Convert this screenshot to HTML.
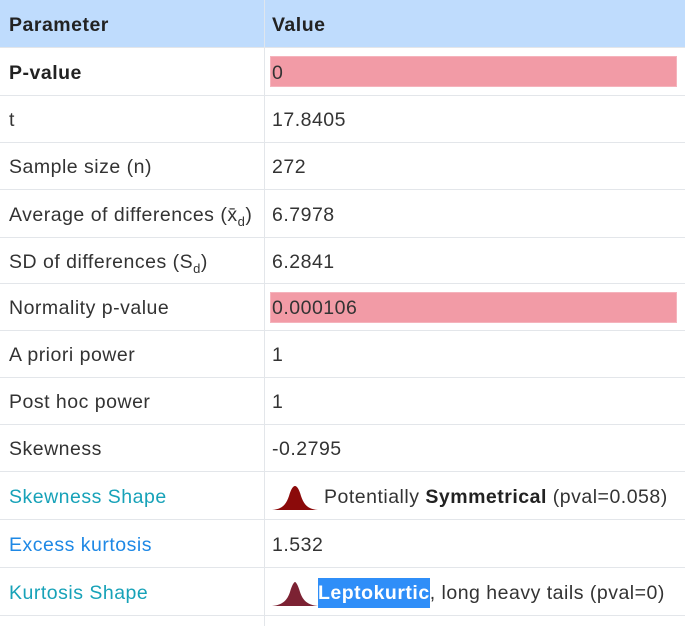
<!DOCTYPE html>
<html><head><style>
body{margin:0;width:685px;height:621px;overflow:hidden;background:#fff;font-family:"Liberation Sans",sans-serif;font-size:19.5px;letter-spacing:0.5px;color:#333}
.r{position:absolute;left:0;width:685px;border-bottom:1.5px solid #e3e6ea}
.c1,.c2{position:absolute;top:0;bottom:0;display:flex;align-items:center;white-space:nowrap;padding-top:3px;box-sizing:border-box}
.c1{left:0;width:265px;padding-left:9px;border-right:1.5px solid #e3e6ea}
.c2{left:266px;right:0;padding-left:6px}
.hl{position:absolute;left:270px;width:407px;height:31px;background:#f29ba6;border:1px solid #f5b3bc;box-sizing:border-box}
.teal{color:#17a2b8}.blue{color:#1e88e5}
sub{font-size:13px;vertical-align:-5px;line-height:0}
svg{margin-right:6px}
</style></head><body>
<div class="r" style="top:0;height:47px;background:#bfdcfd"><div class="c1" style="font-weight:bold;color:#222;border-color:#dfe6ee">Parameter</div><div class="c2" style="font-weight:bold;color:#222">Value</div></div>
<div class="hl" style="top:56px"></div>
<div class="hl" style="top:292px"></div>
<div class="r" style="top:48px;height:47px"><div class="c1" style="font-weight:bold;color:#222">P-value</div><div class="c2">0</div></div>
<div class="r" style="top:96px;height:46px"><div class="c1">t</div><div class="c2">17.8405</div></div>
<div class="r" style="top:143px;height:46px"><div class="c1">Sample size (n)</div><div class="c2">272</div></div>
<div class="r" style="top:190px;height:47px"><div class="c1"><span>Average of differences (x̄<sub>d</sub>)</span></div><div class="c2">6.7978</div></div>
<div class="r" style="top:238px;height:45px"><div class="c1"><span>SD of differences (S<sub>d</sub>)</span></div><div class="c2">6.2841</div></div>
<div class="r" style="top:284px;height:46px"><div class="c1">Normality p-value</div><div class="c2">0.000106</div></div>
<div class="r" style="top:331px;height:46px"><div class="c1">A priori power</div><div class="c2">1</div></div>
<div class="r" style="top:378px;height:46px"><div class="c1">Post hoc power</div><div class="c2">1</div></div>
<div class="r" style="top:425px;height:46px"><div class="c1">Skewness</div><div class="c2">-0.2795</div></div>
<div class="r" style="top:472px;height:47px"><div class="c1 teal">Skewness Shape</div><div class="c2"><svg width="46" height="28" viewBox="0 0 46 28"><path d="M0 27 C10 26 14 22 17 13 C19 6 21 3 23 3 C25 3 27 6 29 13 C32 22 36 26 46 27 Z" fill="#8b0a0a"/></svg><span>Potentially <b style="color:#222">Symmetrical</b> (pval=0.058)</span></div></div>
<div class="r" style="top:520px;height:47px"><div class="c1 blue">Excess kurtosis</div><div class="c2">1.532</div></div>
<div class="r" style="top:568px;height:47px"><div class="c1 teal">Kurtosis Shape</div><div class="c2"><svg width="46" height="28" viewBox="0 0 46 28"><path d="M0 27 C10 26 15 22 18 13 C20 6 22 3 23 3 C24 3 26 6 28 13 C31 22 36 26 46 27 Z" fill="#7c2233"/></svg><span><span style="margin-left:-6px;background:#2f8ef8;color:#fff;font-weight:bold;padding:4px 0">Leptokurtic</span>, long heavy tails (pval=0)</span></div></div>
<div class="r" style="top:616px;height:10px;border:none"><div class="c1"></div></div>
</body></html>
